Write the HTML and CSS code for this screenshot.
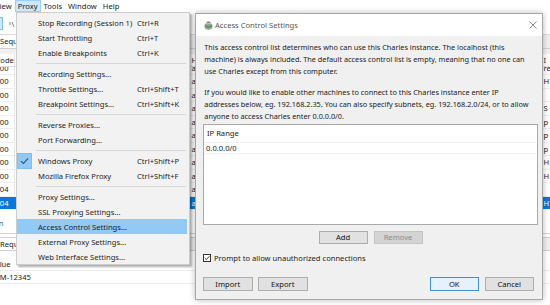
FILE: index.html
```html
<!DOCTYPE html>
<html>
<head>
<meta charset="utf-8">
<title>Charles - Access Control Settings</title>
<link rel="stylesheet" href="styles.css">
</head>
<body>
<div class="app">
  <div class="menubar">
    <span class="mb-item mb-first">View</span>
    <span class="mb-item mb-open">Proxy</span>
    <span class="mb-item">Tools</span>
    <span class="mb-item">Window</span>
    <span class="mb-item">Help</span>
  </div>
  <div class="toolbar">
    <span class="tb-btn"></span>
    <svg class="tb-icon" width="6" height="7" viewBox="0 0 6 7"><path d="M1 1 L1 4 M3 1 L5 6" stroke="#777" stroke-width="0.9" fill="none"/></svg>
  </div>
  <div class="tabs"><span class="tab">Sequence</span></div>
  <div class="seq">
    <div class="row head"><span class="c1">Code</span><span></span><span>Ho</span><span>I</span></div>
    <div class="rows">
      <div class="row partial"><span class="c1">200</span><span></span><span>ap</span><span>re</span></div>
      <div class="row"><span class="c1">200</span><span></span><span>ap</span><span>H</span></div>
      <div class="row"><span class="c1">200</span><span></span><span>al</span><span></span></div>
      <div class="row"><span class="c1">200</span><span></span><span>ap</span><span>S</span></div>
      <div class="row"><span class="c1">200</span><span></span><span>ap</span><span>p</span></div>
      <div class="row"><span class="c1">200</span><span></span><span>al</span><span>p</span></div>
      <div class="row"><span class="c1">200</span><span></span><span>ap</span><span>p</span></div>
      <div class="row"><span class="c1">200</span><span></span><span>ap</span><span>H</span></div>
      <div class="row"><span class="c1">200</span><span></span><span>ap</span><span>H</span></div>
      <div class="row"><span class="c1">304</span><span></span><span>ap</span><span></span></div>
      <div class="row sel"><span class="c1">304</span><span></span><span>ap</span><span>H</span></div>
    </div>
  </div>
  <div class="filter"><span class="link">Session</span></div>
  <div class="tabs2"><span class="tab">Request</span></div>
  <div class="kv head"><span class="kv-cell kv-h">Value</span></div>
  <div class="kv"><span class="kv-cell kv-v">CM-12345</span></div>
</div>

<div class="menu">
  <div class="mi"><span class="chk"></span><span>Stop Recording (Session 1)</span><span>Ctrl+R</span></div>
  <div class="mi"><span class="chk"></span><span>Start Throttling</span><span>Ctrl+T</span></div>
  <div class="mi"><span class="chk"></span><span>Enable Breakpoints</span><span>Ctrl+K</span></div>
  <div class="msep"></div>
  <div class="mi"><span class="chk"></span><span>Recording Settings...</span><span></span></div>
  <div class="mi"><span class="chk"></span><span>Throttle Settings...</span><span>Ctrl+Shift+T</span></div>
  <div class="mi"><span class="chk"></span><span>Breakpoint Settings...</span><span>Ctrl+Shift+K</span></div>
  <div class="msep"></div>
  <div class="mi"><span class="chk"></span><span>Reverse Proxies...</span><span></span></div>
  <div class="mi"><span class="chk"></span><span>Port Forwarding...</span><span></span></div>
  <div class="msep"></div>
  <div class="mi"><span class="chk on"><svg width="9" height="8" viewBox="0 0 9 8"><path d="M1 4.2 L3.4 6.5 L8 1.3" stroke="#2b4f77" stroke-width="1.1" fill="none"/></svg></span><span>Windows Proxy</span><span>Ctrl+Shift+P</span></div>
  <div class="mi"><span class="chk"></span><span>Mozilla Firefox Proxy</span><span>Ctrl+Shift+F</span></div>
  <div class="msep"></div>
  <div class="mi"><span class="chk"></span><span>Proxy Settings...</span><span></span></div>
  <div class="mi"><span class="chk"></span><span>SSL Proxying Settings...</span><span></span></div>
  <div class="mi hl"><span class="chk"></span><span>Access Control Settings...</span><span></span></div>
  <div class="mi"><span class="chk"></span><span>External Proxy Settings...</span><span></span></div>
  <div class="mi"><span class="chk"></span><span>Web Interface Settings...</span><span></span></div>
</div>

<div class="dialog">
  <div class="titlebar">
    <svg class="app-icon" width="9" height="10" viewBox="0 0 9 10">
      <ellipse cx="4.5" cy="6.2" rx="4" ry="3.5" fill="#9aa39a"/>
      <path d="M1 5.5 Q4.5 8.5 8 5.5" stroke="#3f9a45" stroke-width="1.4" fill="none"/>
      <ellipse cx="4.5" cy="2.4" rx="2.6" ry="1.5" fill="#c4c4c4"/>
      <ellipse cx="4.5" cy="2.4" rx="1.3" ry="0.7" fill="#7a7a7a"/>
    </svg>
    <span class="title">Access Control Settings</span>
    <svg class="close" width="8" height="8" viewBox="0 0 8 8"><path d="M0.5 0.5 L7.5 7.5 M7.5 0.5 L0.5 7.5" stroke="#6a6a6a" stroke-width="0.8"/></svg>
  </div>
  <div class="dbody">
    <p class="para">This access control list determines who can use this Charles instance. The localhost (this<br>machine) is always included. The default access control list is empty, meaning that no one can<br>use Charles except from this computer.</p>
    <p class="para p2">If you would like to enable other machines to connect to this Charles instance enter IP<br>addresses below, eg. 192.168.2.35. You can also specify subnets, eg. 192.168.2.0/24, or to allow<br>anyone to access Charles enter 0.0.0.0/0.</p>
    <div class="iptable">
      <div class="ip-head">IP Range</div>
      <div class="ip-row">0.0.0.0/0</div>
    </div>
    <div class="btnrow">
      <span class="btn">Add</span>
      <span class="btn disabled">Remove</span>
    </div>
    <label class="check">
      <span class="cbox"><svg width="7" height="6" viewBox="0 0 7 6"><path d="M0.8 3 L2.7 4.9 L6.3 0.9" stroke="#222" stroke-width="1" fill="none"/></svg></span>
      <span>Prompt to allow unauthorized connections</span>
    </label>
    <div class="footer">
      <div class="fgroup">
        <span class="btn">Import</span>
        <span class="btn">Export</span>
      </div>
      <div class="fgroup">
        <span class="btn default">OK</span>
        <span class="btn">Cancel</span>
      </div>
    </div>
  </div>
</div>
</body>
</html>
```

FILE: styles.css
```css
* { box-sizing: border-box; }
html, body { margin: 0; padding: 0; }
body {
  width: 550px;
  height: 305px;
  overflow: hidden;
  position: relative;
  background: #ffffff;
  font-family: "Noto Sans", sans-serif;
  font-size: 7.6px;
  color: #1b1b1b;
}

/* ---------- background application ---------- */
.app {
  display: flex;
  flex-direction: column;
  height: 305px;
  overflow: hidden;
}
.menubar {
  height: 13px;
  display: flex;
  align-items: flex-start;
  margin-left: -8px;
  background: #fff;
}
.mb-item {
  height: 12px;
  line-height: 10px;
  padding: 0 2px;
  border: 1px solid transparent;
  white-space: nowrap;
}
.mb-open {
  background: #cce8ff;
  border-color: #99d1ff;
}
.toolbar {
  height: 22px;
  display: flex;
  align-items: center;
  border-bottom: 1px solid #dcdcdc;
  gap: 6px;
}
.tb-btn {
  width: 13px;
  height: 13px;
  margin-left: -10px;
  background: #cce8ff;
  border: 1px solid #7fbff0;
}
.tb-icon { margin-top: 1px; }
.tabs, .tabs2 {
  display: flex;
  align-items: stretch;
  background: #f0f0f0;
  border-bottom: 1px solid #d0d0d0;
}
.tabs { height: 14px; }
.tab {
  background: #fff;
  padding: 0 6px 0 0;
  line-height: 13px;
  border-right: 1px solid #d0d0d0;
}
.seq {
  margin-left: -6px;
  padding-top: 5px;
  background: #f0f0f0;
}
.row {
  display: grid;
  grid-template-columns: 21px 175px 352px 1fr;
  height: 13.5px;
  align-items: center;
  background: #fff;
  border-bottom: 1px solid #eeeeee;
  white-space: nowrap;
}
.row > span {
  overflow: hidden;
  padding-left: 1.5px;
  line-height: 12px;
}
.row .c1 { border-right: 1px solid #e3e3e3; }
.row.head {
  height: 13px;
  border-bottom: 1px solid #dedede;
}
.rows {
  height: 143px;
  overflow: hidden;
}
.row.partial {
  height: 8px;
  align-items: end;
  overflow: hidden;
}
.row.partial > span {
  height: 8px;
  line-height: 2px;
}
.row.sel {
  background: #0a78d7;
  color: #fff;
}
.row.sel .c1 { border-right-color: #0a78d7; }
.filter {
  height: 24px;
  display: flex;
  align-items: center;
  padding-top: 3px;
  border-bottom: 1px solid #d4d4d4;
  overflow: hidden;
}
.link {
  color: #1f6fc5;
  margin-left: -23.5px;
}
.tabs2 {
  margin-top: 3px;
  height: 14px;
  border-top: 1px solid #d0d0d0;
}
.kv {
  height: 13px;
  display: flex;
  align-items: center;
  border-bottom: 1px solid #ececec;
  white-space: nowrap;
}
.kv.head { margin-top: 7px; }
.kv-h { margin-left: -9px; }
.kv-v { margin-left: -5px; }

/* ---------- Proxy menu (popup overlay) ---------- */
.menu {
  position: absolute;
  left: 16px;
  top: 12px;
  width: 174px;
  height: 253px;
  background: #f2f2f2;
  border: 1px solid #cccccc;
  box-shadow: 2px 2px 2px rgba(0, 0, 0, 0.32);
  padding: 2px 2px 0 0;
  display: flex;
  flex-direction: column;
  color: #1e1e1e;
}
.mi {
  display: grid;
  grid-template-columns: 21px 99px 1fr;
  height: 15px;
  align-items: center;
  white-space: nowrap;
  line-height: 12px;
}
.mi.hl { background: #91c9f7; }
.chk {
  width: 15px;
  height: 16px;
  display: flex;
  align-items: center;
  justify-content: center;
}
.chk.on {
  background: #90c8f6;
  border: 1px solid #80bdf0;
}
.msep {
  height: 6px;
  display: flex;
  align-items: center;
  padding: 0 1px 0 19px;
}
.msep::after {
  content: "";
  flex: 1;
  height: 1px;
  background: #d7d7d7;
}

/* ---------- dialog window (overlay) ---------- */
.dialog {
  position: absolute;
  left: 195px;
  top: 13px;
  width: 348px;
  height: 287px;
  border: 1px solid #a8a8a8;
  box-shadow: 0 0 6px rgba(0, 0, 0, 0.28);
  background: #f0f0f0;
  display: flex;
  flex-direction: column;
}
.titlebar {
  height: 22px;
  background: #fff;
  display: flex;
  align-items: center;
  padding: 0 5px 0 8px;
  gap: 1px;
}
.app-icon { margin-right: 1px; }
.title {
  color: #555;
  flex: 1;
  white-space: nowrap;
}
.dbody {
  flex: 1;
  display: flex;
  flex-direction: column;
  padding: 0 4px 8px 7px;
}
.para {
  margin: 5px 0 0 1.3px;
  font-size: 7.3px;
  line-height: 12.2px;
  white-space: nowrap;
  color: #1a1a1a;
}
.para.p2 { margin-top: 8.4px; }
.iptable {
  margin-top: 1px;
  height: 101px;
  background: #fff;
  border: 1px solid #a9a9a9;
  padding-right: 1px;
}
.ip-head {
  height: 18px;
  line-height: 17px;
  padding-left: 3px;
  border-bottom: 1px solid #efefef;
}
.ip-row {
  height: 11px;
  line-height: 10px;
  padding-left: 2px;
  border-bottom: 1px solid #f2f2f2;
}
.btnrow {
  margin-top: 6px;
  display: flex;
  justify-content: center;
  gap: 6px;
}
.btn {
  width: 49px;
  height: 13.5px;
  display: flex;
  align-items: center;
  justify-content: center;
  background: #e1e1e1;
  border: 1px solid #adadad;
  color: #111;
}
.btn.disabled {
  background: #d4d4d4;
  border-color: #c4c4c4;
  color: #8a8a8a;
}
.btn.default {
  background: #e5f1fb;
  border-color: #3c8fd9;
}
.check {
  margin-top: 8px;
  display: flex;
  align-items: center;
  gap: 3px;
  height: 12px;
}
.cbox {
  width: 8px;
  height: 8px;
  border: 1px solid #333;
  background: #fff;
  display: flex;
  align-items: center;
  justify-content: center;
}
.footer {
  margin-top: auto;
  display: flex;
  justify-content: space-between;
  padding-right: 4px;
}
.fgroup {
  display: flex;
  gap: 5.5px;
}
.footer .btn {
  width: 49.5px;
  height: 14.5px;
}
```
